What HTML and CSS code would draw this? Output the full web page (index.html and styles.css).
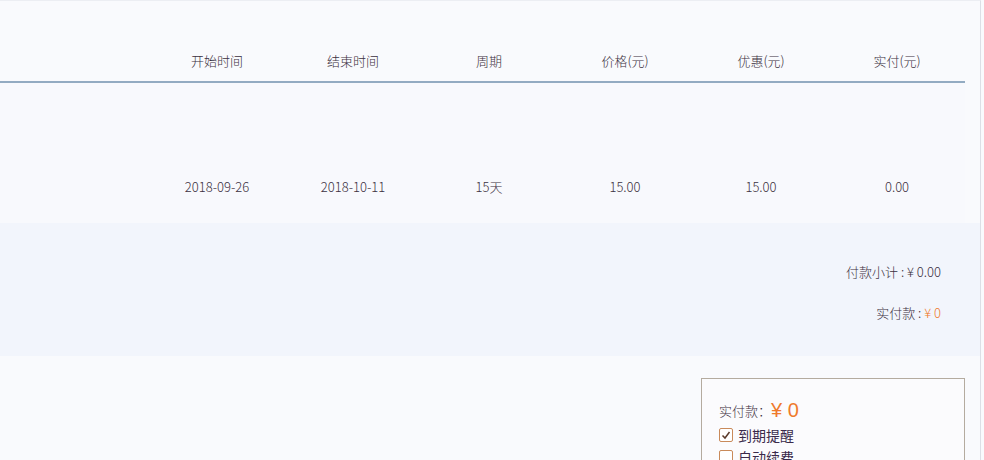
FILE: index.html
```html
<!DOCTYPE html>
<html lang="zh">
<head>
<meta charset="utf-8">
<link rel="stylesheet" href="styles.css">
</head>
<body>
<div class="page">
  <div class="table">
    <div class="row head">
      <div class="cell"></div>
      <div class="cell">开始时间</div>
      <div class="cell">结束时间</div>
      <div class="cell">周期</div>
      <div class="cell">价格(元)</div>
      <div class="cell">优惠(元)</div>
      <div class="cell">实付(元)</div>
    </div>
    <div class="row body">
      <div class="cell"></div>
      <div class="cell">2018-09-26</div>
      <div class="cell">2018-10-11</div>
      <div class="cell">15天</div>
      <div class="cell">15.00</div>
      <div class="cell">15.00</div>
      <div class="cell">0.00</div>
    </div>
  </div>
  <div class="summary">
    <div class="sum-line">付款小计 : ¥ 0.00</div>
    <div class="sum-line">实付款 : <span class="orange">¥ 0</span></div>
  </div>
  <div class="pay-wrap">
    <div class="pay-box">
      <div class="pay-total">实付款：<span class="big">¥ 0</span></div>
      <label class="check"><span class="box"><svg width="12" height="12" viewBox="0 0 12 12"><path d="M2.5 6.5 L5 9 L9.5 3" fill="none" stroke="#5a3a2a" stroke-width="1.5"/></svg></span>到期提醒</label>
      <label class="check"><span class="box"></span>自动续费</label>
    </div>
  </div>
</div>
</body>
</html>
```

FILE: styles.css
```css
html, body {
  margin: 0;
  padding: 0;
  height: 100%;
  overflow: hidden;
}
body {
  background: #f9fafd;
  font-family: "Noto Sans CJK SC", "Liberation Sans", sans-serif;
  font-size: 13px;
  font-weight: 300;
  color: #3b3040;
}
.page {
  width: 981px;
  height: 460px;
  border-top: 1px solid #eceef3;
  border-right: 1px solid #dcdfe6;
  box-sizing: border-box;
  background: #f9fafd;
}
.table {
  width: 965px;
}
.row {
  display: grid;
  grid-template-columns: 149px repeat(6, 136px);
}
.cell {
  text-align: center;
}
.head {
  height: 82px;
  align-items: end;
  box-sizing: border-box;
  border-bottom: 2px solid #93abc2;
}
.head .cell {
  padding-bottom: 12px;
  line-height: 17px;
}
.body {
  height: 140px;
  align-items: start;
  background: #f8f9fd;
}
.body .cell {
  padding-top: 95px;
  line-height: 17px;
}
.summary {
  height: 133px;
  background: #f2f5fc;
  display: flex;
  flex-direction: column;
  align-items: flex-end;
  padding: 40px 39px 0 0;
  box-sizing: border-box;
  gap: 24px;
}
.sum-line {
  line-height: 17px;
}
.orange {
  color: #ef7a2c;
}
.pay-wrap {
  padding-top: 22px;
  padding-left: 701px;
}
.pay-box {
  width: 264px;
  height: 100px;
  border: 1px solid #b4ab9f;
  box-sizing: border-box;
  background: #fbfbfd;
  padding: 19px 0 0 17px;
}
.pay-total {
  display: flex;
  align-items: center;
  height: 24px;
  font-size: 13px;
}
.big {
  color: #ef7a2c;
  font-size: 20px;
  font-family: "Liberation Sans", sans-serif;
  font-weight: 400;
}
.check {
  display: flex;
  align-items: center;
  gap: 5px;
  margin-top: 4px;
  font-size: 14px;
  font-weight: 400;
  color: #3a2a4a;
  line-height: 18px;
}
.box {
  width: 14px;
  height: 14px;
  border: 1px solid #c98a5a;
  border-radius: 2px;
  box-sizing: border-box;
  display: flex;
  align-items: center;
  justify-content: center;
  background: #fff;
}
```
